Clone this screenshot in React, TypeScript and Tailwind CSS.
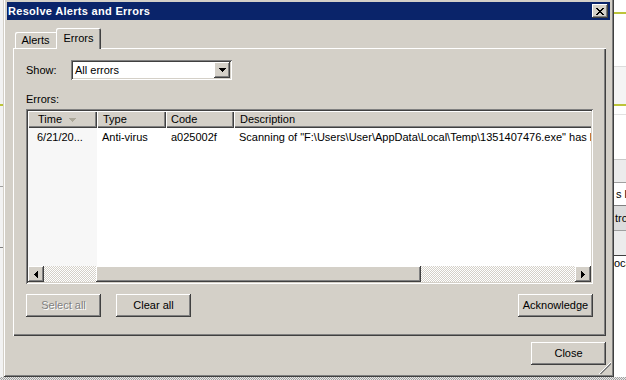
import React from "react";

const raised =
  "bg-[#d4d0c8] shadow-[inset_-1px_-1px_#404040,inset_1px_1px_#ffffff,inset_-2px_-2px_#808080]";

function Btn({ label, disabled }: { label: string; disabled?: boolean }) {
  return (
    <div
      className={
        "w-[75px] h-[23px] flex items-center justify-center bg-[#d4d0c8] shadow-[inset_-1px_-1px_#404040,inset_1px_1px_#ffffff,inset_-2px_-2px_#808080] " +
        (disabled ? "text-[#808080] [text-shadow:1px_1px_#ffffff]" : "text-black")
      }
    >
      {label}
    </div>
  );
}

function TriDown({ color = "#000" }: { color?: string }) {
  return (
    <svg width="7" height="4" viewBox="0 0 7 4" shapeRendering="crispEdges">
      <path d="M0 0h7v1H0zM1 1h5v1H1zM2 2h3v1H2zM3 3h1v1H3z" fill={color} />
    </svg>
  );
}

function TriLeft() {
  return (
    <svg width="4" height="7" viewBox="0 0 4 7" shapeRendering="crispEdges">
      <path d="M3 0h1v7H3zM2 1h1v5H2zM1 2h1v3H1zM0 3h1v1H0z" fill="#000" />
    </svg>
  );
}

function TriRight() {
  return (
    <svg width="4" height="7" viewBox="0 0 4 7" shapeRendering="crispEdges">
      <path d="M0 0h1v7H0zM1 1h1v5H1zM2 2h1v3H2zM3 3h1v1H3z" fill="#000" />
    </svg>
  );
}

export default function App() {
  return (
    <div className="relative w-[626px] h-[380px] overflow-hidden bg-white font-['Liberation_Sans',Arial,sans-serif] text-[11px] leading-[13px] text-black">
      {/* desktop behind the dialog */}
      <div className="absolute left-0 top-0 w-[3px] h-[380px] bg-[#f2f2f2]">
        <div className="mt-[104px] h-[2px] bg-[#bcc43a]" />
        <div className="mt-[80px] h-[1px] bg-[#a0a0a0]" />
        <div className="mt-[60px] h-[1px] bg-[#808080]" />
      </div>
      <div className="absolute left-[614px] top-0 w-[12px] h-[380px] bg-white flex flex-col">
        <div className="mt-[12px] h-[2px] bg-[#bcc43a]" />
        <div className="mt-[52px] h-[1px] bg-[#dcdcdc]" />
        <div className="h-[37px] bg-[#f4f4f4]" />
        <div className="h-[2px] bg-[#bcc43a]" />
        <div className="mt-[8px] h-[1px] bg-[#e2e2e2]" />
        <div className="mt-[44px] h-[1px] bg-[#c8c8c8]" />
        <div className="h-[22px] bg-[#ececec]" />
        <div className="h-[1px] bg-[#a0a0a0]" />
        <div className="h-[22px] bg-white pl-[2px] flex items-center whitespace-nowrap">s l</div>
        <div className="h-[1px] bg-[#808080]" />
        <div className="h-[24px] bg-[#dcdcdc] pl-[1px] flex items-center whitespace-nowrap">tro</div>
        <div className="h-[1px] bg-[#a0a0a0]" />
        <div className="h-[24px] bg-[#ececec]" />
        <div className="h-[1px] bg-[#404040]" />
        <div className="h-[14px] bg-white flex items-center whitespace-nowrap">oca</div>
      </div>
      <div className="absolute left-0 top-[377px] w-[626px] h-[3px] bg-[repeating-conic-gradient(#a0a0a0_0%_25%,#e8e8e8_0%_50%)] bg-[length:2px_2px]" />

      {/* dialog window */}
      <div className="absolute left-[3px] top-[-2px] w-[611px] h-[379px] bg-[#d4d0c8] p-[4px] flex flex-col shadow-[inset_1px_1px_#d4d0c8,inset_-1px_-1px_#404040,inset_2px_2px_#ffffff,inset_-2px_-2px_#808080]">
        {/* title bar */}
        <div className="h-[18px] bg-[#0a246a] flex items-center justify-between pl-[1px] pr-[2px]">
          <span className="text-white font-bold text-[11px] tracking-[0.3px]">Resolve Alerts and Errors</span>
          <div className={"w-[16px] h-[14px] flex items-center justify-center " + raised}>
            <svg width="8" height="7" viewBox="0 0 8 7" shapeRendering="crispEdges">
              <path
                d="M0 0h2v1H0zM6 0h2v1H6zM1 1h2v1H1zM5 1h2v1H5zM2 2h4v1H2zM3 3h2v1H3zM2 4h4v1H2zM1 5h2v1H1zM5 5h2v1H5zM0 6h2v1H0zM6 6h2v1H6z"
                fill="#000"
              />
            </svg>
          </div>
        </div>

        {/* tabs */}
        <div className="mt-[8px] ml-[8px] h-[20px] flex items-end">
          <div className="w-[41px] h-[16px] flex items-center justify-center rounded-tl-[2px] bg-[#d4d0c8] shadow-[inset_1px_1px_#ffffff]">
            Alerts
          </div>
          <div className="relative z-10 -mb-px w-[45px] h-[21px] pb-[1px] flex items-center justify-center rounded-t-[2px] bg-[#d4d0c8] shadow-[inset_1px_1px_#ffffff,inset_-1px_0_#404040,inset_-2px_0_#808080]">
            Errors
          </div>
        </div>

        {/* tab panel */}
        <div className="ml-[6px] w-[593px] h-[288px] px-[13px] pt-[12px] flex flex-col shadow-[inset_1px_1px_#ffffff,inset_-1px_-1px_#404040,inset_-2px_-2px_#808080]">
          <div className="h-[20px] flex items-center">
            <span className="w-[45px]">Show:</span>
            <div className="w-[161px] h-[20px] bg-white p-[2px] flex items-center shadow-[inset_1px_1px_#808080,inset_-1px_-1px_#ffffff,inset_2px_2px_#404040,inset_-2px_-2px_#d4d0c8]">
              <span className="flex-1 pl-[2px]">All errors</span>
              <div className={"w-[16px] h-[16px] flex items-center justify-center " + raised}>
                <TriDown />
              </div>
            </div>
          </div>

          <div className="mt-[13px] h-[13px]">Errors:</div>

          {/* list view */}
          <div className="mt-[3px] w-[567px] h-[175px] bg-white p-[2px] flex flex-col overflow-hidden shadow-[inset_1px_1px_#808080,inset_-1px_-1px_#ffffff,inset_2px_2px_#404040,inset_-2px_-2px_#d4d0c8]">
            <div className="h-[17px] flex bg-[#d4d0c8] overflow-hidden whitespace-nowrap">
              <div className="w-[69px] shrink-0 flex items-center pl-[10px] shadow-[inset_1px_1px_#ffffff,inset_-1px_-1px_#404040,inset_-2px_-2px_#808080]">
                <span>Time</span>
                <span className="ml-[7px] flex">
                  <TriDown color="#aca899" />
                </span>
              </div>
              <div className="w-[69px] shrink-0 flex items-center pl-[6px] shadow-[inset_1px_1px_#ffffff,inset_-1px_-1px_#404040,inset_-2px_-2px_#808080]">
                Type
              </div>
              <div className="w-[68px] shrink-0 flex items-center pl-[5px] shadow-[inset_1px_1px_#ffffff,inset_-1px_-1px_#404040,inset_-2px_-2px_#808080]">
                Code
              </div>
              <div className="w-[420px] shrink-0 flex items-center pl-[6px] shadow-[inset_1px_1px_#ffffff,inset_-1px_-1px_#404040,inset_-2px_-2px_#808080]">
                Description
              </div>
            </div>

            <div className="flex-1 flex overflow-hidden whitespace-nowrap">
              <div className="w-[69px] shrink-0 bg-[#f7f7f7]">
                <div className="h-[18px] flex items-center pl-[9px]">6/21/20...</div>
              </div>
              <div className="w-[69px] shrink-0">
                <div className="h-[18px] flex items-center pl-[5px]">Anti-virus</div>
              </div>
              <div className="w-[68px] shrink-0">
                <div className="h-[18px] flex items-center pl-[5px]">a025002f</div>
              </div>
              <div className="w-[500px] shrink-0">
                <div className="h-[18px] flex items-center pl-[5px]">
                  Scanning of "F:\Users\User\AppData\Local\Temp\1351407476.exe" has been aborted
                </div>
              </div>
            </div>

            {/* horizontal scrollbar */}
            <div className="h-[16px] flex">
              <div className={"w-[16px] h-[16px] flex items-center justify-center " + raised}>
                <TriLeft />
              </div>
              <div className="flex-1 flex bg-[repeating-conic-gradient(#d4d0c8_0%_25%,#ffffff_0%_50%)] bg-[length:2px_2px]">
                <div className="w-[52px]" />
                <div className={"w-[325px] h-[16px] " + raised} />
              </div>
              <div className={"w-[16px] h-[16px] flex items-center justify-center " + raised}>
                <TriRight />
              </div>
            </div>
          </div>

          {/* buttons */}
          <div className="mt-[10px] flex">
            <Btn label="Select all" disabled />
            <div className="ml-[15px]">
              <Btn label="Clear all" />
            </div>
            <div className="ml-auto">
              <Btn label="Acknowledge" />
            </div>
          </div>
        </div>

        <div className="mt-[6px] ml-[524px]">
          <Btn label="Close" />
        </div>

        {/* size grip */}
        <div className="absolute right-[3px] bottom-[3px]">
          <svg width="12" height="12" viewBox="0 0 12 12" shapeRendering="crispEdges">
            <path
              d="M11 0h1v1h-1zM10 1h1v1h-1zM9 2h1v1H9zM8 3h1v1H8zM7 4h1v1H7zM6 5h1v1H6zM5 6h1v1H5zM4 7h1v1H4zM3 8h1v1H3zM2 9h1v1H2zM1 10h1v1H1zM0 11h1v1H0z"
              fill="#ffffff"
            />
            <path
              d="M11 1h1v2h-1zM10 2h1v2h-1zM9 3h1v2H9zM8 4h1v2H8zM7 5h1v2H7zM6 6h1v2H6zM5 7h1v2H5zM4 8h1v2H4zM3 9h1v2H3zM2 10h1v2H2zM1 11h1v1H1z"
              fill="#808080"
            />
          </svg>
        </div>
      </div>
    </div>
  );
}
